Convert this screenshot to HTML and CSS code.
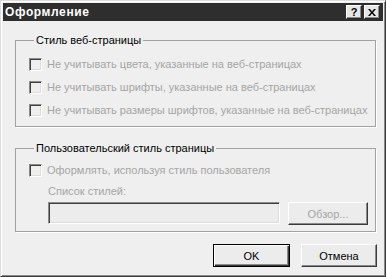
FILE: index.html
```html
<!DOCTYPE html>
<html lang="ru">
<head>
    <meta charset="UTF-8">
    <title>Оформление</title>
    <link rel="stylesheet" href="styles.css">
</head>
<body>

    <div class="window">
        <div class="titlebar">
            <span class="title">Оформление</span>
            <div class="tb-buttons">
                <span class="tb-btn">?</span>
                <span class="tb-btn">
                    <svg width="8" height="7" viewBox="0 0 8 7">
                        <path d="M0 0h2l2 2.5L6 0h2L5 3.5 8 7H6L4 4.5 2 7H0l3-3.5z" fill="#000"/>
                    </svg>
                </span>
            </div>
        </div>

        <div class="content">
            <fieldset class="group first">
                <legend>Стиль веб-страницы</legend>
                <div class="check-row">
                    <span class="check"></span>
                    <label>Не учитывать цвета, указанные на веб-страницах</label>
                </div>
                <div class="check-row">
                    <span class="check"></span>
                    <label>Не учитывать шрифты, указанные на веб-страницах</label>
                </div>
                <div class="check-row">
                    <span class="check"></span>
                    <label>Не учитывать размеры шрифтов, указанные на веб-страницах</label>
                </div>
            </fieldset>

            <fieldset class="group second">
                <legend>Пользовательский стиль страницы</legend>
                <div class="check-row">
                    <span class="check"></span>
                    <label>Оформлять, используя стиль пользователя</label>
                </div>
                <div class="styles-label">Список стилей:</div>
                <div class="file-row">
                    <div class="textbox"></div>
                    <button class="btn browse" disabled>Обзор...</button>
                </div>
            </fieldset>

            <div class="actions">
                <button class="btn default">OK</button>
                <button class="btn cancel">Отмена</button>
            </div>
        </div>
    </div>

</body>
</html>
```

FILE: styles.css
```css
body {
    margin: 0;
    background-color: #efefef;
    font-family: "Liberation Sans", Arial, sans-serif;
    font-size: 11px;
    line-height: 13px;
}
.window {
    width: 386px;
    height: 277px;
    box-sizing: border-box;
    background-color: #efefef;
    border: 1px solid;
    border-color: #dcdcdc #3a3a3a #3a3a3a #dcdcdc;
    padding: 2px;
    box-shadow: inset 1px 1px 0 #ffffff, inset -1px -1px 0 #8a8a8a;
}
.titlebar {
    height: 18px;
    background-color: #2e2e2e;
    display: flex;
    align-items: center;
    justify-content: space-between;
    padding: 0 3px 0 2px;
}
.title {
    color: #ffffff;
    font-weight: bold;
    font-size: 12px;
    letter-spacing: 0.6px;
}
.tb-buttons {
    display: flex;
    gap: 2px;
}
.tb-btn {
    width: 16px;
    height: 14px;
    box-sizing: border-box;
    background-color: #e6e6e6;
    border: 1px solid;
    border-color: #ffffff #2a2a2a #2a2a2a #ffffff;
    box-shadow: inset -1px -1px 0 #8a8a8a;
    display: flex;
    align-items: center;
    justify-content: center;
    font-weight: bold;
    font-size: 11px;
    color: #000000;
}
.content {
    padding: 0 7px 0 12px;
}
.group {
    margin: 0;
    border: 1px solid #a2a2a2;
    box-shadow: 1px 1px 0 #ffffff;
    min-width: 0;
}
.group legend {
    padding: 0 2px;
    margin-left: 5px;
    color: #000000;
}
.group.first {
    margin-top: 13px;
    padding: 11px 0 9px 13px;
}
.group.second {
    margin-top: 15px;
    padding: 9px 0 6px 13px;
}
.check-row {
    display: flex;
    align-items: center;
    gap: 5px;
    height: 13px;
    color: #a5a5a5;
}
.check-row + .check-row {
    margin-top: 10px;
}
.check {
    width: 13px;
    height: 13px;
    box-sizing: border-box;
    border: 1px solid;
    border-color: #8a8a8a #ffffff #ffffff #8a8a8a;
    box-shadow: inset 1px 1px 0 #404040, inset -1px -1px 0 #dcdcdc;
}
.styles-label {
    color: #a5a5a5;
    margin: 8px 0 0 19px;
}
.file-row {
    display: flex;
    align-items: flex-start;
    gap: 8px;
    margin: 4px 0 0 19px;
}
.textbox {
    width: 232px;
    height: 22px;
    box-sizing: border-box;
    border: 1px solid;
    border-color: #8a8a8a #ffffff #ffffff #8a8a8a;
    box-shadow: inset 1px 1px 0 #404040, inset -1px -1px 0 #dcdcdc;
    background-color: #ececec;
}
.btn {
    height: 23px;
    box-sizing: border-box;
    font-family: "Liberation Sans", Arial, sans-serif;
    font-size: 11px;
    background-color: #ececec;
    border: 1px solid;
    border-color: #ffffff #3a3a3a #3a3a3a #ffffff;
    box-shadow: inset -1px -1px 0 #8a8a8a;
    color: #000000;
    padding: 0;
}
.btn.browse {
    width: 80px;
    color: #a5a5a5;
}
.actions {
    display: flex;
    justify-content: flex-end;
    gap: 11px;
    margin: 12px -1px 0 0;
}
.btn.default {
    width: 77px;
    border: 1px solid #000000;
    box-shadow: inset 1px 1px 0 #ffffff, inset -1px -1px 0 #3a3a3a, inset -2px -2px 0 #8a8a8a;
}
.btn.cancel {
    width: 76px;
}
```
